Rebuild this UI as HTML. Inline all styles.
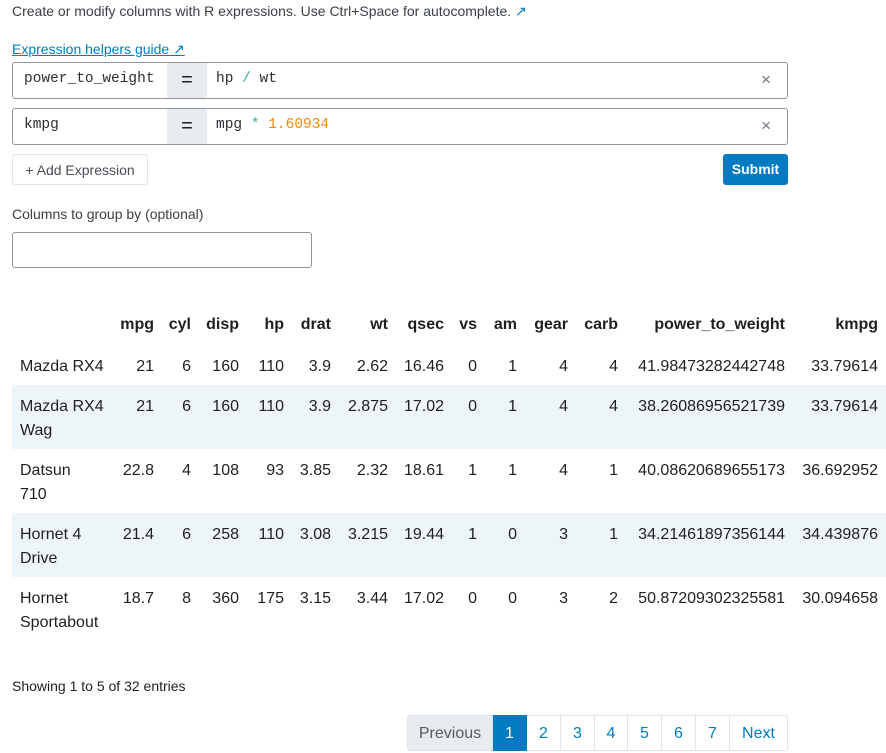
<!DOCTYPE html>
<html><head><meta charset="utf-8">
<style>
*{box-sizing:border-box;margin:0;padding:0}
body{width:886px;height:753px;overflow:hidden;background:#fff;font-family:"Liberation Sans",sans-serif;color:#1d1f21;position:relative}
.a{position:absolute}
.mono{font-family:"Liberation Mono",monospace;font-size:14.5px;color:#2b2f33}
.row{position:absolute;left:12px;width:776px;height:37px;border:1px solid #8d959e;border-radius:3px;background:#fff}
.row .n{position:absolute;left:11px;top:8px}
.row .eq{position:absolute;left:154px;top:0;width:40px;height:35px;background:#e9ecef;text-align:center;line-height:35px;font-size:20px}
.row .v{position:absolute;left:203px;top:8px}
.row .x{position:absolute;right:16px;top:7px;color:#6c757d;font-size:17px}
table{position:absolute;left:12px;top:305px;border-collapse:collapse;table-layout:fixed;font-size:16px}
td,th{text-align:right;padding:0;white-space:nowrap;vertical-align:top}
th{height:40px;padding-top:11px;font-weight:bold}
td{padding-top:10px;line-height:24px}
tr.s td{background:#eef5f9}
td.nm,th.nm{text-align:left;white-space:nowrap;padding-left:8px}
tbody tr{height:64px}
tbody tr.f{height:40px}
.pg{position:absolute;top:715px;height:36px;border:1px solid #dee2e6;border-left:none;line-height:35px;text-align:center;color:#007bc2;font-size:16px}
</style></head><body>
<div class="a" style="left:12px;top:3px;font-size:14px;color:#3b4046">Create or modify columns with R expressions. Use Ctrl+Space for autocomplete. <span style="color:#007bc2">↗</span></div>
<div class="a" style="left:12px;top:41px;font-size:14px;color:#007bc2;text-decoration:underline">Expression helpers guide ↗</div>
<div class="row" style="top:62px"><span class="n mono">power_to_weight</span><div class="eq">=</div><span class="v mono">hp <span style="color:#3fa7b0">/</span> wt</span><span class="x">×</span></div>
<div class="row" style="top:108px"><span class="n mono">kmpg</span><div class="eq">=</div><span class="v mono">mpg <span style="color:#3fa7b0">*</span> <span style="color:#f08a0c">1.60934</span></span><span class="x">×</span></div>
<div class="a" style="left:12px;top:154px;width:136px;height:31px;border:1px solid #dee2e6;border-radius:3px;font-size:14px;color:#4a4f55;line-height:30px;text-align:center">+ Add Expression</div>
<div class="a" style="left:723px;top:154px;width:65px;height:31px;background:#007bc2;border-radius:3px;color:#fff;font-size:14px;font-weight:bold;line-height:31px;text-align:center">Submit</div>
<div class="a" style="left:12px;top:206px;font-size:14px;color:#3b4046">Columns to group by (optional)</div>
<div class="a" style="left:12px;top:232px;width:300px;height:36px;border:1px solid #8d959e;border-radius:3px"></div>
<table>
<colgroup><col style="width:102px"><col style="width:40px"><col style="width:37px"><col style="width:48px"><col style="width:45px"><col style="width:47px"><col style="width:57px"><col style="width:56px"><col style="width:33px"><col style="width:40px"><col style="width:51px"><col style="width:50px"><col style="width:167px"><col style="width:101px"></colgroup>
<thead><tr><th class="nm"></th><th>mpg</th><th>cyl</th><th>disp</th><th>hp</th><th>drat</th><th>wt</th><th>qsec</th><th>vs</th><th>am</th><th>gear</th><th>carb</th><th>power_to_weight</th><th style="padding-right:8px">kmpg</th></tr></thead>
<tbody>
<tr class="f"><td class="nm">Mazda RX4</td><td>21</td><td>6</td><td>160</td><td>110</td><td>3.9</td><td>2.62</td><td>16.46</td><td>0</td><td>1</td><td>4</td><td>4</td><td>41.98473282442748</td><td style="padding-right:8px">33.79614</td></tr>
<tr class="s"><td class="nm">Mazda RX4<br>Wag</td><td>21</td><td>6</td><td>160</td><td>110</td><td>3.9</td><td>2.875</td><td>17.02</td><td>0</td><td>1</td><td>4</td><td>4</td><td>38.26086956521739</td><td style="padding-right:8px">33.79614</td></tr>
<tr><td class="nm">Datsun<br>710</td><td>22.8</td><td>4</td><td>108</td><td>93</td><td>3.85</td><td>2.32</td><td>18.61</td><td>1</td><td>1</td><td>4</td><td>1</td><td>40.08620689655173</td><td style="padding-right:8px">36.692952</td></tr>
<tr class="s"><td class="nm">Hornet 4<br>Drive</td><td>21.4</td><td>6</td><td>258</td><td>110</td><td>3.08</td><td>3.215</td><td>19.44</td><td>1</td><td>0</td><td>3</td><td>1</td><td>34.21461897356144</td><td style="padding-right:8px">34.439876</td></tr>
<tr><td class="nm">Hornet<br>Sportabout</td><td>18.7</td><td>8</td><td>360</td><td>175</td><td>3.15</td><td>3.44</td><td>17.02</td><td>0</td><td>0</td><td>3</td><td>2</td><td>50.87209302325581</td><td style="padding-right:8px">30.094658</td></tr>
</tbody></table>
<div class="a" style="left:12px;top:678px;font-size:14px">Showing 1 to 5 of 32 entries</div>
<div class="pg" style="left:407px;width:86px;border-left:1px solid #dee2e6;background:#e9ecef;color:#555b61;border-radius:3px 0 0 3px">Previous</div>
<div class="pg" style="left:493px;width:34px;background:#007bc2;color:#fff;border-color:#007bc2">1</div>
<div class="pg" style="left:527px;width:34px">2</div>
<div class="pg" style="left:561px;width:34px">3</div>
<div class="pg" style="left:595px;width:33px">4</div>
<div class="pg" style="left:628px;width:34px">5</div>
<div class="pg" style="left:662px;width:34px">6</div>
<div class="pg" style="left:696px;width:34px">7</div>
<div class="pg" style="left:730px;width:58px;border-radius:0 3px 3px 0">Next</div>
</body></html>
